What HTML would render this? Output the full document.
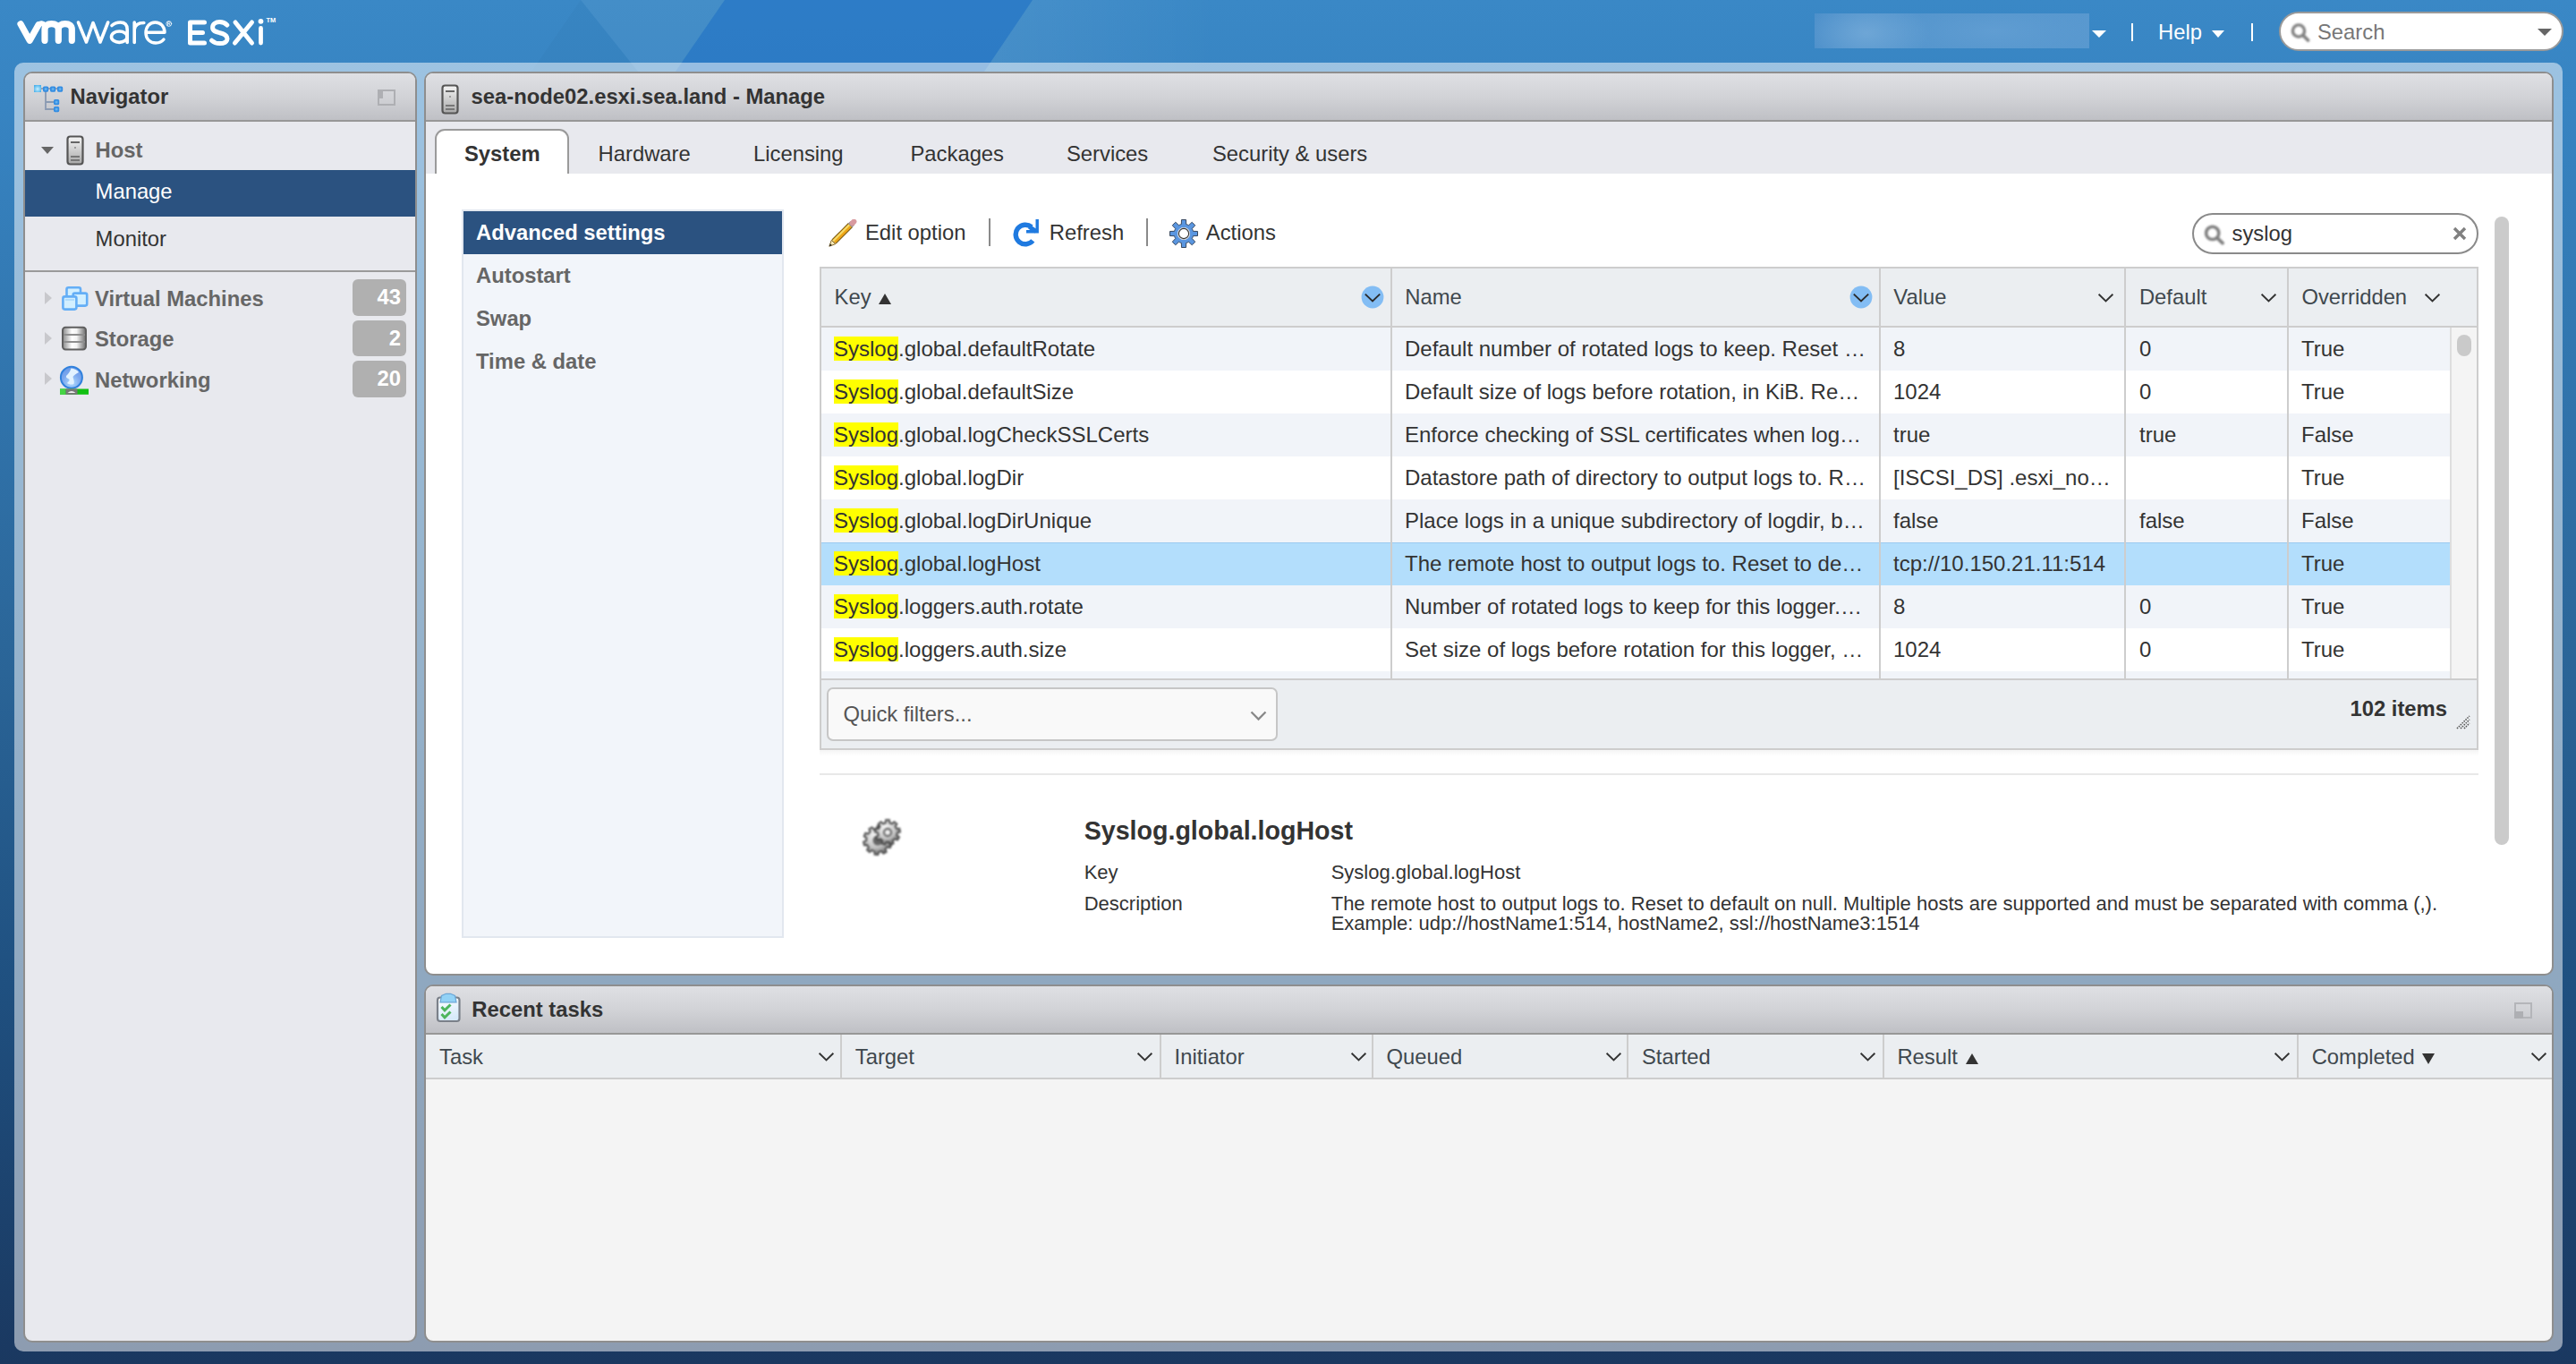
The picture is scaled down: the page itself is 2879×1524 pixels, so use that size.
<!DOCTYPE html>
<html><head><meta charset="utf-8">
<style>
*{box-sizing:border-box;margin:0;padding:0}
html,body{width:2879px;height:1524px;overflow:hidden}
body{position:relative;font-family:"Liberation Sans",sans-serif;font-size:23.8px;color:#333;
 background:linear-gradient(to bottom,#3a88c6 0px,#3784c2 120px,#2b6699 720px,#1f5080 1100px,#1a3860 1524px)}
.a{position:absolute}
.t{position:absolute;white-space:nowrap;line-height:28px;font-size:23.8px}
.b{font-weight:bold}
.g{font-size:24px}
.frame{position:absolute;left:16px;top:70px;width:2848px;height:1440px;border-radius:10px;background:rgba(255,255,255,0.5)}
.panel{position:absolute;border:2px solid #8e8e8e;border-radius:10px;overflow:hidden}
.phead{position:absolute;left:0;top:0;right:0;height:54px;border-bottom:2px solid #979797;
 background:linear-gradient(to bottom,#dfe0e4 0%,#d2d3d7 50%,#bfc0c5 100%)}
.chev{position:absolute;width:18px;height:11px}
</style></head><body>
<!-- header -->
<svg class="a" style="left:0;top:0" width="2879" height="82">
 <defs><linearGradient id="hlg" x1="0" y1="0" x2="1" y2="0"><stop offset="0" stop-color="#fff" stop-opacity="0.07"/><stop offset="1" stop-color="#fff" stop-opacity="0"/></linearGradient></defs>
 <polygon points="649,0 810,0 755,80 713,80" fill="#ffffff" fill-opacity="0.05"/>
 <polygon points="649,0 713,80 594,80" fill="#000" fill-opacity="0.02"/>
 <polygon points="810,0 1154,0 1100,80 755,80" fill="#1f6fc8" fill-opacity="0.45"/>
 <polygon points="1154,0 1360,0 1360,80 1100,80" fill="url(#hlg)"/>
</svg>

<!-- logo -->
<svg class="a" style="left:0;top:0" width="330" height="70" fill="none" stroke="#fff" stroke-linecap="round" stroke-linejoin="round">
 <path d="M23,26.8 L33.2,45.3 L43,27.8" stroke-width="7.2"/>
 <path d="M43,27.8 C45,25.5 48,26 50,28.5" stroke-width="6"/>
 <path d="M50,45.3 L50,33 C50,28.5 53,26.6 57.6,26.6 C62.2,26.6 65.3,28.5 65.3,33 L65.3,45.3 M65.3,33 C65.3,28.5 68.4,26.6 72.8,26.6 C77.2,26.6 80.3,28.5 80.3,33 L80.3,45.3" stroke-width="7.2"/>
 <path d="M87.5,25 L96.5,47 L104,25.5 L112,47 L120.7,25" stroke-width="3.6"/>
 <path d="M125,28.5 C128,25.8 131.5,25 134.5,25 C139.5,25 142.2,28 142.2,33 L142.2,47.5" stroke-width="3.6"/>
 <ellipse cx="133.3" cy="41.2" rx="8.8" ry="6.2" stroke-width="3.6"/>
 <path d="M150.2,47.5 L150.2,25 M150.2,33 C151,27.5 155,25.5 160.8,25.5" stroke-width="3.6"/>
 <path d="M164,36.2 L184,36.2 C184,29.5 179.5,25 173.5,25 C167,25 163,30 163,36.5 C163,43.5 167.5,48 174,48 C178,48 181,46.5 183,44" stroke-width="3.5"/>
 <circle cx="188.8" cy="26.5" r="2.9" stroke-width="0.8"/><path d="M187.6,28.4 L187.6,24.6 L189.1,24.6 C190.4,24.6 190.4,26.6 189.1,26.6 L187.6,26.6 M189,26.6 L190.2,28.4" stroke-width="0.7"/>
 <path d="M212.5,25 L228.5,25 M212.5,25 L212.5,48 L228.5,48 M212.5,36.4 L226.5,36.4" stroke-width="5"/>
 <path d="M253.8,28 C251.5,25.6 248.5,24.6 245.5,24.6 C241,24.6 237.6,27 237.6,30.8 C237.6,34.8 241.3,35.6 245.7,36.7 C250.7,37.9 254,39.5 254,43.3 C254,46.8 250.5,48.6 245.8,48.6 C242,48.6 238.8,47.4 236.6,45.2" stroke-width="5"/>
 <path d="M263,25 L281.5,48 M281.5,25 L262.5,48" stroke-width="5"/>
 <path d="M291.5,31.5 L291.5,48" stroke-width="4.8"/>
 <circle cx="291.5" cy="23.8" r="2.9" fill="#fff" stroke="none"/>
</svg>
<div class="t b" style="left:297.5px;top:16px;font-size:7.5px;line-height:14px;color:#fff">TM</div>
<!-- blurred user -->
<div class="a" style="left:2028px;top:15px;width:307px;height:39px;background:radial-gradient(ellipse 70px 40px at 58px 22px,#6ea6d6 0%,rgba(110,166,214,0) 100%),radial-gradient(ellipse 120px 40px at 200px 20px,#609dd2 0%,rgba(96,157,210,0) 100%),linear-gradient(90deg,#4c8fca 0%,#5495cd 30%,#5193cb 60%,#5898cf 100%)"></div>
<div class="a" style="left:2337.5px;top:33.6px;width:0;height:0;border-left:8.2px solid transparent;border-right:8.2px solid transparent;border-top:8.6px solid #fff"></div>
<div class="a" style="left:2382px;top:26px;width:2px;height:20px;background:#fff"></div>
<div class="t" style="left:2412px;top:22px;color:#fff">Help</div>
<div class="a" style="left:2472px;top:33.8px;width:0;height:0;border-left:7.9px solid transparent;border-right:7.9px solid transparent;border-top:8.3px solid #fff"></div>
<div class="a" style="left:2516px;top:26px;width:2px;height:20px;background:#fff"></div>
<div class="a" style="left:2547px;top:13px;width:318px;height:44px;border:2px solid #9a9a9a;border-radius:22px;background:#fff"></div>
<svg class="a" style="left:2558px;top:24px;filter:blur(0.8px)" width="26" height="26"><circle cx="11" cy="10.5" r="6.6" fill="none" stroke="#808080" stroke-width="3.4"/><path d="M16,15.5 L21.5,21" stroke="#808080" stroke-width="3.8" stroke-linecap="round"/></svg>
<div class="t" style="left:2590px;top:22px;color:#777">Search</div>
<div class="a" style="left:2836px;top:32px;width:0;height:0;border-left:8px solid transparent;border-right:8px solid transparent;border-top:8px solid #666"></div>
<div class="frame"></div>
<!-- navigator panel -->
<div class="panel" style="left:26px;top:80px;width:440px;height:1420px;background:#e8e9ee">
 <div class="phead"></div>
</div>

<!-- nav content (absolute page coords) -->
<svg class="a" style="left:36px;top:93px" width="38" height="36">
 <defs><radialGradient id="nvb" cx="0.5" cy="0.55" r="0.6"><stop offset="0" stop-color="#c6f0ff"/><stop offset="1" stop-color="#4ab0ea"/></radialGradient>
 <radialGradient id="nvs" cx="0.5" cy="0.5" r="0.6"><stop offset="0" stop-color="#7cc4f4"/><stop offset="0.5" stop-color="#3a92e4"/><stop offset="1" stop-color="#2a86e0"/></radialGradient></defs>
 <g stroke="#8a9ab2" stroke-width="1.8" fill="none"><path d="M10,6 L32,6"/><path d="M15,9 L15,29 L25,29 M15,21 L25,21"/></g>
 <rect x="2" y="2" width="8" height="8" fill="url(#nvb)"/>
 <rect x="12" y="3.5" width="6.2" height="6.2" rx="1.6" fill="url(#nvs)"/>
 <rect x="20" y="3.5" width="6.2" height="6.2" rx="1.6" fill="url(#nvs)"/>
 <rect x="28" y="3.5" width="6.2" height="6.2" rx="1.6" fill="url(#nvs)"/>
 <rect x="24" y="18" width="6.2" height="6.2" rx="1.6" fill="url(#nvs)"/>
 <rect x="24" y="26" width="6.2" height="6.2" rx="1.6" fill="url(#nvs)"/>
</svg>
<div class="t b" style="left:78.5px;top:94px;color:#333">Navigator</div>
<svg class="a" style="left:422px;top:100px;filter:blur(0.4px)" width="20" height="18"><rect x="1" y="1" width="18" height="16" fill="none" stroke="#aeafb3" stroke-width="2"/><rect x="0" y="0" width="6" height="10" fill="#aeafb3"/></svg>
<div class="a" style="left:46px;top:164px;width:0;height:0;border-left:7px solid transparent;border-right:7px solid transparent;border-top:8px solid #666"></div>
<svg class="a" style="left:74px;top:151px" width="20" height="34">
 <defs><linearGradient id="srv" x1="0" y1="0" x2="0" y2="1"><stop offset="0" stop-color="#f5f5f5"/><stop offset="1" stop-color="#a8a8a8"/></linearGradient></defs>
 <rect x="1.5" y="1.5" width="17" height="31" rx="3" fill="url(#srv)" stroke="#555" stroke-width="2.2"/>
 <rect x="5" y="7" width="10" height="2" fill="#666"/><circle cx="10" cy="14" r="1" fill="#888"/>
 <rect x="5" y="23" width="10" height="2" fill="#777"/><rect x="5" y="27" width="10" height="2" fill="#777"/>
</svg>
<div class="t b" style="left:106.6px;top:154px;color:#666">Host</div>
<div class="a" style="left:28px;top:190px;width:436px;height:52px;background:#2b5280"></div>
<div class="t" style="left:106.6px;top:200px;color:#fff">Manage</div>
<div class="t" style="left:106.6px;top:253px;color:#333">Monitor</div>
<div class="a" style="left:28px;top:302px;width:436px;height:2px;background:#9a9a9a"></div>
<div class="a" style="left:50px;top:326px;width:0;height:0;border-top:7px solid transparent;border-bottom:7px solid transparent;border-left:8px solid #c8c8cc"></div>
<div class="a" style="left:50px;top:371px;width:0;height:0;border-top:7px solid transparent;border-bottom:7px solid transparent;border-left:8px solid #c8c8cc"></div>
<div class="a" style="left:50px;top:416px;width:0;height:0;border-top:7px solid transparent;border-bottom:7px solid transparent;border-left:8px solid #c8c8cc"></div>
<svg class="a" style="left:64px;top:315px;filter:blur(0.6px)" width="38" height="35">
 <g stroke="#64aef6" stroke-width="2.6" fill="#d2efff">
 <rect x="10.5" y="6.3" width="15.5" height="13" rx="2"/>
 <rect x="17.7" y="12.6" width="15.5" height="14" rx="2"/>
 <rect x="6.4" y="16.4" width="15" height="14.2" rx="2"/>
 </g>
 <path d="M9,20 L19,20" stroke="#a6d6fa" stroke-width="1.5"/>
</svg>
<svg class="a" style="left:68px;top:364px;filter:blur(0.6px)" width="30" height="28">
 <defs><linearGradient id="stg" x1="0" y1="0" x2="1" y2="0"><stop offset="0" stop-color="#8a8a8a"/><stop offset="0.4" stop-color="#fff"/><stop offset="0.6" stop-color="#f4f4f4"/><stop offset="1" stop-color="#6a6a6a"/></linearGradient></defs>
 <rect x="2" y="1.8" width="26" height="24.6" rx="3.2" fill="url(#stg)" stroke="#5f5f5f" stroke-width="2"/>
 <path d="M3,10 L27,10 M3,18 L27,18" stroke="#8e8e8e" stroke-width="2"/>
</svg>
<svg class="a" style="left:62px;top:404px;filter:blur(0.5px)" width="40" height="40">
 <defs><radialGradient id="glb" cx="0.5" cy="0.75" r="0.7"><stop offset="0" stop-color="#b0dcff"/><stop offset="0.6" stop-color="#7ca8ee"/><stop offset="1" stop-color="#6a9ae8"/></radialGradient></defs>
 <circle cx="17.9" cy="17.7" r="12" fill="url(#glb)" stroke="#2f80dc" stroke-width="2"/>
 <path d="M17.5,7.5 C21,8 24.5,9.5 26,12 C23,14 20.5,15 19.5,17 C20,20 21.5,22 20.5,25 C18,26 15,25.5 13,24 C15,22 16.5,21 15,19.5 C13,18.5 11.5,18 12,16 C14,14 16,12 17.5,7.5 Z" fill="#e2f2ff"/>
 <rect x="5" y="30.5" width="32" height="6.3" fill="#12c012"/><rect x="5" y="30.5" width="6.5" height="6.3" fill="#44d444"/>
 <rect x="11.5" y="30.5" width="13" height="6.3" fill="#777"/><path d="M13.5,35 Q18,31 22.5,35 Z" fill="#eee"/>
</svg>
<div class="t b" style="left:106px;top:320px;color:#666">Virtual Machines</div>
<div class="t b" style="left:106px;top:365px;color:#666">Storage</div>
<div class="t b" style="left:106px;top:411px;color:#666">Networking</div>
<div class="a" style="left:394px;top:312px;width:60px;height:41px;border-radius:6px;background:#b0b0b0"></div>
<div class="a" style="left:394px;top:358px;width:60px;height:40px;border-radius:6px;background:#b0b0b0"></div>
<div class="a" style="left:394px;top:403px;width:60px;height:41px;border-radius:6px;background:#b0b0b0"></div>
<div class="t b" style="right:2431px;top:317.5px;color:#fff">43</div>
<div class="t b" style="right:2431px;top:363.5px;color:#fff">2</div>
<div class="t b" style="right:2431px;top:409px;color:#fff">20</div>
<!-- main panel -->
<div class="panel" style="left:474px;top:80px;width:2380px;height:1010px;background:#fff">
 <div class="phead"></div>
 <div class="a" style="left:0;top:54px;right:0;height:58px;background:#e8e9ee"></div>
</div>

<!-- main content page coords -->
<svg class="a" style="left:493px;top:94px" width="20" height="34">
 <rect x="1.5" y="1.5" width="17" height="31" rx="3" fill="url(#srv)" stroke="#555" stroke-width="2.2"/>
 <rect x="5" y="7" width="10" height="2" fill="#666"/><circle cx="10" cy="14" r="1" fill="#888"/>
 <rect x="5" y="23" width="10" height="2" fill="#777"/><rect x="5" y="27" width="10" height="2" fill="#777"/>
</svg>
<div class="t b" style="left:526.6px;top:94px;color:#333">sea-node02.esxi.sea.land - Manage</div>
<div class="a" style="left:486px;top:144px;width:150px;height:50px;border:2px solid #9a9a9a;border-bottom:none;border-radius:11px 11px 0 0;background:#fff"></div>
<div class="t b" style="left:519px;top:158px">System</div>
<div class="t" style="left:668.6px;top:158px">Hardware</div>
<div class="t" style="left:842px;top:158px">Licensing</div>
<div class="t" style="left:1017.5px;top:158px">Packages</div>
<div class="t" style="left:1192px;top:158px">Services</div>
<div class="t" style="left:1355px;top:158px">Security &amp; users</div>
<!-- left menu -->
<div class="a" style="left:516px;top:234px;width:360px;height:814px;border:2px solid #e2e7ef;background:#f2f5fa"></div>
<div class="a" style="left:518px;top:236px;width:356px;height:48px;background:#2b5280"></div>
<div class="t b" style="left:532px;top:246px;color:#fff">Advanced settings</div>
<div class="t b" style="left:532px;top:294px;color:#666">Autostart</div>
<div class="t b" style="left:532px;top:341.5px;color:#666">Swap</div>
<div class="t b" style="left:532px;top:390px;color:#666">Time &amp; date</div>
<!-- toolbar -->
<svg class="a" style="left:925px;top:245px;filter:blur(0.35px)" width="34" height="32">
 <path d="M7,25 L25.5,6.5" stroke="#7a5c18" stroke-width="7"/>
 <path d="M7,25 L25.5,6.5" stroke="#eea516" stroke-width="5"/>
 <path d="M6.2,24.2 L24.7,5.7" stroke="#f4dc6c" stroke-width="2"/>
 <path d="M25,7 L27.8,4.2" stroke="#8f8f8f" stroke-width="6.4"/>
 <path d="M27.6,4.4 L29.4,2.6" stroke="#d89aa0" stroke-width="6" stroke-linecap="round"/>
 <path d="M1.8,30.2 L4.3,23.3 L8.7,27.7 Z" fill="#f6e8b8" stroke="#7a5c18" stroke-width="0.9"/>
 <path d="M1.8,30.2 L2.9,27.2 L4.8,29.1 Z" fill="#222"/>
</svg>
<div class="t" style="left:967px;top:246px">Edit option</div>
<div class="a" style="left:1105px;top:244px;width:2px;height:31px;background:#8a8a8a"></div>
<svg class="a" style="left:1131px;top:244px;filter:blur(0.3px)" width="32" height="33">
 <path d="M21.9,9.7 A10.8,10.8 0 1 0 23.3,24.9" fill="none" stroke="#1f7ae0" stroke-width="5.4"/>
 <path d="M19.5,9.5 L27,14.5" fill="none" stroke="#1f7ae0" stroke-width="5"/>
 <path d="M16,14.8 L28.2,14.8 L28.2,1" fill="none" stroke="#1f7ae0" stroke-width="3.4"/>
</svg>
<div class="t" style="left:1172.8px;top:246px">Refresh</div>
<div class="a" style="left:1281px;top:244px;width:2px;height:31px;background:#8a8a8a"></div>
<svg class="a" style="left:1305px;top:243px" width="36" height="36">
 <path d="M15.33,7.54 L15.50,2.50 L20.50,2.50 L20.67,7.54 L21.41,7.75 L22.13,8.02 L22.83,8.34 L23.51,8.71 L27.19,5.27 L30.73,8.81 L27.29,12.49 L27.66,13.17 L27.98,13.87 L28.25,14.59 L28.46,15.33 L33.50,15.50 L33.50,20.50 L28.46,20.67 L28.25,21.41 L27.98,22.13 L27.66,22.83 L27.29,23.51 L30.73,27.19 L27.19,30.73 L23.51,27.29 L22.83,27.66 L22.13,27.98 L21.41,28.25 L20.67,28.46 L20.50,33.50 L15.50,33.50 L15.33,28.46 L14.59,28.25 L13.87,27.98 L13.17,27.66 L12.49,27.29 L8.81,30.73 L5.27,27.19 L8.71,23.51 L8.34,22.83 L8.02,22.13 L7.75,21.41 L7.54,20.67 L2.50,20.50 L2.50,15.50 L7.54,15.33 L7.75,14.59 L8.02,13.87 L8.34,13.17 L8.71,12.49 L5.27,8.81 L8.81,5.27 L12.49,8.71 L13.17,8.34 L13.87,8.02 L14.59,7.75 Z" fill="#5a96e0" stroke="#2a3a50" stroke-width="0.9"/>
 <circle cx="18" cy="18" r="7" fill="#fff"/>
 <circle cx="18" cy="18" r="6.3" fill="none" stroke="#bbb" stroke-width="0.8"/>
 <circle cx="18" cy="18" r="5.6" fill="none" stroke="#333" stroke-width="1.1"/>
</svg>
<div class="t" style="left:1347.8px;top:246px">Actions</div>
<!-- grid search -->
<div class="a" style="left:2450px;top:238px;width:320px;height:46px;border:2px solid #8a8a8a;border-radius:23px;background:#fff"></div>
<svg class="a" style="left:2461px;top:250px;filter:blur(0.8px)" width="27" height="27"><circle cx="11.7" cy="10.4" r="7.1" fill="none" stroke="#808080" stroke-width="3.6"/><path d="M17,15.8 L23,21.6" stroke="#808080" stroke-width="3.8" stroke-linecap="round"/></svg>
<div class="t" style="left:2494.5px;top:246.5px">syslog</div>
<svg class="a" style="left:2740px;top:252px;filter:blur(0.6px)" width="18" height="18"><path d="M3,3 L15,15 M15,3 L3,15" stroke="#808080" stroke-width="3.4"/></svg>
<div class="a" style="left:2788px;top:242px;width:16px;height:702px;border-radius:8px;background:#cbcbcb"></div>
<!-- grid -->
<div class="a" style="left:916px;top:298px;width:1854px;height:540px;border:2px solid #cdcdcd;background:#fff"></div>
<div class="a" style="left:918px;top:300px;width:1850px;height:64px;background:#ebeef1"></div>
<div class="a" style="left:918px;top:364px;width:1850px;height:2px;background:#cdcdcd"></div>
<div class="a" style="left:918px;top:366px;width:1820px;height:48px;background:#f1f4f9"></div>
<div class="a" style="left:918px;top:414px;width:1820px;height:48px;background:#ffffff"></div>
<div class="a" style="left:918px;top:462px;width:1820px;height:48px;background:#f1f4f9"></div>
<div class="a" style="left:918px;top:510px;width:1820px;height:48px;background:#ffffff"></div>
<div class="a" style="left:918px;top:558px;width:1820px;height:48px;background:#f1f4f9"></div>
<div class="a" style="left:918px;top:606px;width:1820px;height:48px;background:#b3defc"></div>
<div class="a" style="left:918px;top:606px;width:1820px;height:1px;background:#9ccbf0"></div>
<div class="a" style="left:918px;top:654px;width:1820px;height:48px;background:#f1f4f9"></div>
<div class="a" style="left:918px;top:702px;width:1820px;height:48px;background:#ffffff"></div>
<div class="a" style="left:918px;top:750px;width:1820px;height:8px;background:#f1f4f9"></div>
<div class="a" style="left:2738px;top:366px;width:30px;height:392px;background:#f4f4f4;border-left:2px solid #dedede"></div>
<div class="a" style="left:2746px;top:374px;width:16px;height:24px;border-radius:8px;background:#cacaca"></div>
<div class="a" style="left:1554px;top:300px;width:2px;height:458px;background:#cdcdcd"></div>
<div class="a" style="left:2100px;top:300px;width:2px;height:458px;background:#cdcdcd"></div>
<div class="a" style="left:2374px;top:300px;width:2px;height:458px;background:#cdcdcd"></div>
<div class="a" style="left:2556px;top:300px;width:2px;height:458px;background:#cdcdcd"></div>
<div class="a" style="left:918px;top:758px;width:1850px;height:2px;background:#cdcdcd"></div>
<div class="a" style="left:918px;top:760px;width:1850px;height:76px;background:#ebeef1"></div>
<div class="a" style="left:916px;top:838px;width:1854px;height:7px;background:linear-gradient(#f5f5f5,#fff)"></div>
<div class="t" style="left:932.6px;top:318px;color:#3f484e">Key</div>
<div class="a" style="left:981.5px;top:328px;width:0;height:0;border-left:7.5px solid transparent;border-right:7.5px solid transparent;border-bottom:12px solid #333"></div>
<svg class="a" style="left:1521px;top:319px" width="26" height="26"><circle cx="13" cy="13" r="12.4" fill="#83bdf4"/><path d="M4.8,9.6 L13,17.4 L21.2,9.6" fill="none" stroke="#2a2a2a" stroke-width="1.9"/></svg>
<div class="t" style="left:1570.3px;top:318px;color:#3f484e">Name</div>
<svg class="a" style="left:2067px;top:319px" width="26" height="26"><circle cx="13" cy="13" r="12.4" fill="#83bdf4"/><path d="M4.8,9.6 L13,17.4 L21.2,9.6" fill="none" stroke="#2a2a2a" stroke-width="1.9"/></svg>
<div class="t" style="left:2116.3px;top:318px;color:#3f484e">Value</div>
<svg class="a" style="left:2343.5px;top:327px" width="19" height="12"><path d="M1.6,1.8 L9.5,9.4 L17.4,1.8" fill="none" stroke="#333" stroke-width="1.9"/></svg>
<div class="t" style="left:2390.9px;top:318px;color:#3f484e">Default</div>
<svg class="a" style="left:2525.5px;top:327px" width="19" height="12"><path d="M1.6,1.8 L9.5,9.4 L17.4,1.8" fill="none" stroke="#333" stroke-width="1.9"/></svg>
<div class="t" style="left:2572.4px;top:318px;color:#3f484e">Overridden</div>
<svg class="a" style="left:2709px;top:327px" width="19" height="12"><path d="M1.6,1.8 L9.5,9.4 L17.4,1.8" fill="none" stroke="#333" stroke-width="1.9"/></svg>
<div class="t g" style="left:932px;top:376px"><span style="background:#ffff00">Syslog</span>.global.defaultRotate</div>
<div class="t g" style="left:1570px;top:376px">Default number of rotated logs to keep. Reset …</div>
<div class="t g" style="left:2116px;top:376px">8</div>
<div class="t g" style="left:2391px;top:376px">0</div>
<div class="t g" style="left:2572px;top:376px">True</div>
<div class="t g" style="left:932px;top:424px"><span style="background:#ffff00">Syslog</span>.global.defaultSize</div>
<div class="t g" style="left:1570px;top:424px">Default size of logs before rotation, in KiB. Re…</div>
<div class="t g" style="left:2116px;top:424px">1024</div>
<div class="t g" style="left:2391px;top:424px">0</div>
<div class="t g" style="left:2572px;top:424px">True</div>
<div class="t g" style="left:932px;top:472px"><span style="background:#ffff00">Syslog</span>.global.logCheckSSLCerts</div>
<div class="t g" style="left:1570px;top:472px">Enforce checking of SSL certificates when log…</div>
<div class="t g" style="left:2116px;top:472px">true</div>
<div class="t g" style="left:2391px;top:472px">true</div>
<div class="t g" style="left:2572px;top:472px">False</div>
<div class="t g" style="left:932px;top:520px"><span style="background:#ffff00">Syslog</span>.global.logDir</div>
<div class="t g" style="left:1570px;top:520px">Datastore path of directory to output logs to. R…</div>
<div class="t g" style="left:2116px;top:520px">[ISCSI_DS] .esxi_no…</div>
<div class="t g" style="left:2572px;top:520px">True</div>
<div class="t g" style="left:932px;top:568px"><span style="background:#ffff00">Syslog</span>.global.logDirUnique</div>
<div class="t g" style="left:1570px;top:568px">Place logs in a unique subdirectory of logdir, b…</div>
<div class="t g" style="left:2116px;top:568px">false</div>
<div class="t g" style="left:2391px;top:568px">false</div>
<div class="t g" style="left:2572px;top:568px">False</div>
<div class="t g" style="left:932px;top:616px"><span style="background:#ffff00">Syslog</span>.global.logHost</div>
<div class="t g" style="left:1570px;top:616px">The remote host to output logs to. Reset to de…</div>
<div class="t g" style="left:2116px;top:616px">tcp://10.150.21.11:514</div>
<div class="t g" style="left:2572px;top:616px">True</div>
<div class="t g" style="left:932px;top:664px"><span style="background:#ffff00">Syslog</span>.loggers.auth.rotate</div>
<div class="t g" style="left:1570px;top:664px">Number of rotated logs to keep for this logger.…</div>
<div class="t g" style="left:2116px;top:664px">8</div>
<div class="t g" style="left:2391px;top:664px">0</div>
<div class="t g" style="left:2572px;top:664px">True</div>
<div class="t g" style="left:932px;top:712px"><span style="background:#ffff00">Syslog</span>.loggers.auth.size</div>
<div class="t g" style="left:1570px;top:712px">Set size of logs before rotation for this logger, …</div>
<div class="t g" style="left:2116px;top:712px">1024</div>
<div class="t g" style="left:2391px;top:712px">0</div>
<div class="t g" style="left:2572px;top:712px">True</div>
<div class="a" style="left:924px;top:768px;width:504px;height:60px;border:2px solid #c6c6c6;border-radius:7px;background:#f9f9f9"></div>
<div class="t" style="left:942.4px;top:783.5px;color:#555">Quick filters...</div>
<svg class="a" style="left:1396.5px;top:793.5px" width="19" height="12"><path d="M1.5,1.5 L9.5,9.5 L17.5,1.5" fill="none" stroke="#888" stroke-width="2.3"/></svg>
<div class="t b" style="right:144px;top:777.5px">102 items</div>
<svg class="a" style="left:2744px;top:798px" width="18" height="18"><path d="M2,16 L16,2 M6,16 L16,6 M10,16 L16,10" stroke="#555" stroke-width="1.6" stroke-dasharray="1.5,1.2"/></svg>
<div class="a" style="left:916px;top:864px;width:1854px;height:2px;background:#e8e8e8"></div>
<svg class="a" style="left:964px;top:905px;filter:blur(1px)" width="50" height="56">
 <defs><radialGradient id="gg" cx="0.4" cy="0.3" r="0.8"><stop offset="0" stop-color="#f6f6f6"/><stop offset="0.55" stop-color="#c4c4c4"/><stop offset="1" stop-color="#555"/></radialGradient></defs>
 <path d="M15.85,21.25 L16.68,18.00 L20.49,18.39 L20.66,21.73 L21.41,21.99 L22.15,22.28 L22.87,22.62 L23.56,23.01 L26.14,20.87 L29.00,23.42 L27.17,26.23 L27.63,26.87 L28.05,27.55 L28.43,28.25 L28.77,28.97 L32.11,28.75 L32.93,32.50 L29.80,33.69 L29.79,34.49 L29.74,35.28 L29.63,36.07 L29.48,36.85 L32.31,38.64 L30.77,42.15 L27.53,41.27 L27.06,41.91 L26.55,42.52 L26.01,43.10 L25.42,43.64 L26.66,46.75 L23.35,48.68 L21.25,46.07 L20.49,46.31 L19.72,46.51 L18.94,46.65 L18.15,46.75 L17.32,50.00 L13.51,49.61 L13.34,46.27 L12.59,46.01 L11.85,45.72 L11.13,45.38 L10.44,44.99 L7.86,47.13 L5.00,44.58 L6.83,41.77 L6.37,41.13 L5.95,40.45 L5.57,39.75 L5.23,39.03 L1.89,39.25 L1.07,35.50 L4.20,34.31 L4.21,33.51 L4.26,32.72 L4.37,31.93 L4.52,31.15 L1.69,29.36 L3.23,25.85 L6.47,26.73 L6.94,26.09 L7.45,25.48 L7.99,24.90 L8.58,24.36 L7.34,21.25 L10.65,19.32 L12.75,21.93 L13.51,21.69 L14.28,21.49 L15.06,21.35 Z" fill="url(#gg)" stroke="#444" stroke-width="1.8"/>
 <circle cx="17" cy="34" r="5.5" fill="#666"/>
 <path d="M25.75,14.44 L26.05,11.14 L29.95,11.14 L30.25,14.44 L30.98,14.62 L31.69,14.85 L32.39,15.13 L33.06,15.46 L35.41,13.12 L38.41,15.64 L36.51,18.36 L36.96,18.96 L37.35,19.60 L37.71,20.26 L38.01,20.95 L41.31,20.67 L41.99,24.52 L38.79,25.38 L38.74,26.13 L38.64,26.88 L38.48,27.61 L38.27,28.33 L40.98,30.24 L39.03,33.62 L36.02,32.23 L35.50,32.77 L34.94,33.27 L34.35,33.74 L33.73,34.16 L34.58,37.36 L30.91,38.70 L29.50,35.70 L28.75,35.77 L28.00,35.80 L27.25,35.77 L26.50,35.70 L25.09,38.70 L21.42,37.36 L22.27,34.16 L21.65,33.74 L21.06,33.27 L20.50,32.77 L19.98,32.23 L16.97,33.62 L15.02,30.24 L17.73,28.33 L17.52,27.61 L17.36,26.88 L17.26,26.13 L17.21,25.38 L14.01,24.52 L14.69,20.67 L17.99,20.95 L18.29,20.26 L18.65,19.60 L19.04,18.96 L19.49,18.36 L17.59,15.64 L20.59,13.12 L22.94,15.46 L23.61,15.13 L24.31,14.85 L25.02,14.62 Z" fill="url(#gg)" stroke="#444" stroke-width="1.8"/>
 <circle cx="28" cy="25" r="4" fill="#eee" stroke="#555" stroke-width="1.8"/>
</svg>
<div class="t b" style="left:1211.7px;top:911px;font-size:28.6px;line-height:34px">Syslog.global.logHost</div>
<div class="t" style="left:1211.7px;top:964.4px;font-size:22px;line-height:22px">Key</div>
<div class="t" style="left:1487.7px;top:964.4px;font-size:22px;line-height:22px">Syslog.global.logHost</div>
<div class="t" style="left:1211.7px;top:999.4px;font-size:22px;line-height:22px">Description</div>
<div class="t" style="left:1487.7px;top:999.4px;font-size:22px;line-height:22px">The remote host to output logs to. Reset to default on null. Multiple hosts are supported and must be separated with comma (,).<br>Example: udp://hostName1:514, hostName2, ssl://hostName3:1514</div>
<!-- recent tasks -->
<div class="panel" style="left:474px;top:1100px;width:2380px;height:400px;background:#f4f4f4">
 <div class="phead"></div>
</div>
<!-- recent tasks content -->
<svg class="a" style="left:486px;top:1108px;filter:blur(0.5px)" width="30" height="35">
 <defs><linearGradient id="clip" x1="0" y1="0" x2="0.3" y2="1"><stop offset="0" stop-color="#ffffff"/><stop offset="1" stop-color="#d6eafa"/></linearGradient></defs>
 <rect x="3" y="6.5" width="24.5" height="26.5" rx="3" fill="url(#clip)" stroke="#7a8089" stroke-width="2.2"/>
 <path d="M6,11.8 L24,11.8 L22.5,4.5 L17.5,2.3 L12.5,2.3 L7.5,4.5 Z" fill="#92d2f6" stroke="#6aa6d6" stroke-width="1.2"/>
 <path d="M7.5,17 L11,20.8 L17.5,14.5 M7.5,25 L11,28.8 L17.5,22.5" fill="none" stroke="#4db55c" stroke-width="3"/>
</svg>
<div class="t b" style="left:527.3px;top:1114px">Recent tasks</div>
<svg class="a" style="left:2810px;top:1120px;filter:blur(0.4px)" width="20" height="18"><rect x="1" y="1" width="18" height="16" fill="none" stroke="#b4b5b9" stroke-width="2"/><rect x="0" y="10" width="10" height="8" fill="#aeafb3"/></svg>
<div class="a" style="left:476px;top:1156px;width:2376px;height:48px;background:#ebeef1"></div>
<div class="a" style="left:476px;top:1204px;width:2376px;height:2px;background:#cdcdcd"></div>
<div class="a" style="left:939px;top:1156px;width:2px;height:48px;background:#cdcdcd"></div>
<div class="a" style="left:1296px;top:1156px;width:2px;height:48px;background:#cdcdcd"></div>
<div class="a" style="left:1533px;top:1156px;width:2px;height:48px;background:#cdcdcd"></div>
<div class="a" style="left:1818px;top:1156px;width:2px;height:48px;background:#cdcdcd"></div>
<div class="a" style="left:2104px;top:1156px;width:2px;height:48px;background:#cdcdcd"></div>
<div class="a" style="left:2567px;top:1156px;width:2px;height:48px;background:#cdcdcd"></div>
<div class="t" style="left:491px;top:1166.6px;color:#3f484e">Task</div>
<svg class="a" style="left:914px;top:1175px" width="19" height="12"><path d="M1.6,1.8 L9.5,9.4 L17.4,1.8" fill="none" stroke="#333" stroke-width="1.9"/></svg>
<div class="t" style="left:955.8px;top:1166.6px;color:#3f484e">Target</div>
<svg class="a" style="left:1270px;top:1175px" width="19" height="12"><path d="M1.6,1.8 L9.5,9.4 L17.4,1.8" fill="none" stroke="#333" stroke-width="1.9"/></svg>
<div class="t" style="left:1312.6px;top:1166.6px;color:#3f484e">Initiator</div>
<svg class="a" style="left:1508.5px;top:1175px" width="19" height="12"><path d="M1.6,1.8 L9.5,9.4 L17.4,1.8" fill="none" stroke="#333" stroke-width="1.9"/></svg>
<div class="t" style="left:1549.6px;top:1166.6px;color:#3f484e">Queued</div>
<svg class="a" style="left:1793.5px;top:1175px" width="19" height="12"><path d="M1.6,1.8 L9.5,9.4 L17.4,1.8" fill="none" stroke="#333" stroke-width="1.9"/></svg>
<div class="t" style="left:1835px;top:1166.6px;color:#3f484e">Started</div>
<svg class="a" style="left:2078px;top:1175px" width="19" height="12"><path d="M1.6,1.8 L9.5,9.4 L17.4,1.8" fill="none" stroke="#333" stroke-width="1.9"/></svg>
<div class="t" style="left:2120.4px;top:1166.6px;color:#3f484e">Result</div>
<svg class="a" style="left:2541px;top:1175px" width="19" height="12"><path d="M1.6,1.8 L9.5,9.4 L17.4,1.8" fill="none" stroke="#333" stroke-width="1.9"/></svg>
<div class="t" style="left:2583.7px;top:1166.6px;color:#3f484e">Completed</div>
<svg class="a" style="left:2827.5px;top:1175px" width="19" height="12"><path d="M1.6,1.8 L9.5,9.4 L17.4,1.8" fill="none" stroke="#333" stroke-width="1.9"/></svg>
<div class="a" style="left:2196.5px;top:1176.5px;width:0;height:0;border-left:7.5px solid transparent;border-right:7.5px solid transparent;border-bottom:12px solid #333"></div>
<div class="a" style="left:2707px;top:1176.5px;width:0;height:0;border-left:7.5px solid transparent;border-right:7.5px solid transparent;border-top:12px solid #333"></div>
</body></html>
